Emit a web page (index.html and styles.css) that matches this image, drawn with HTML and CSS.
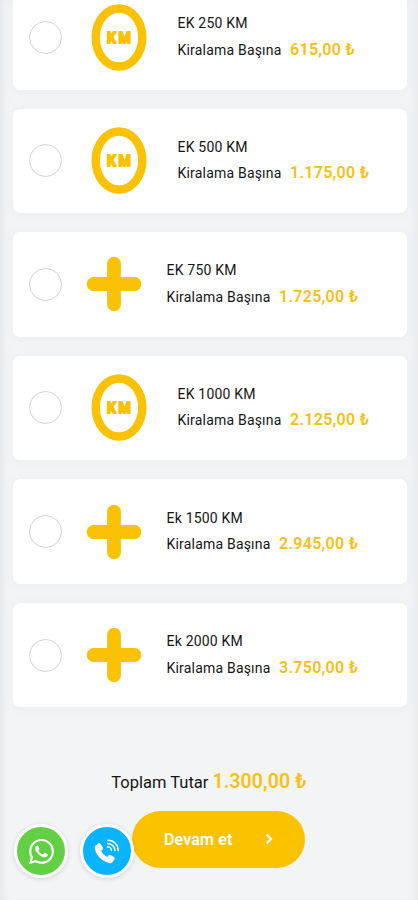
FILE: index.html
```html
<!DOCTYPE html>
<html lang="tr">
<head>
<meta charset="utf-8">
<meta name="viewport" content="width=device-width, initial-scale=1">
<title>Ek Kilometre</title>
<link rel="stylesheet" href="styles.css">
</head>
<body>
<svg class="defs" aria-hidden="true">
  <symbol id="ring" viewBox="0 0 56 67">
    <ellipse cx="28" cy="33.5" rx="23.3" ry="29" fill="none" stroke="#fac203" stroke-width="8.4"/>
  </symbol>
  <symbol id="plus" viewBox="0 0 56 56">
    <path d="M28 7.6v40.8M7.6 28h40.8" fill="none" stroke="#fac203" stroke-width="13.8" stroke-linecap="round"/>
  </symbol>
</svg>
<main class="page">
  <div class="options">
    <label class="card"><span class="radio"></span><svg class="icon km" viewBox="0 0 56 67"><use href="#ring"/><text class="km-label" x="29.2" y="38.6" text-anchor="middle">KM</text></svg><span class="info"><span class="name">EK 250 KM</span><span class="line">Kiralama Başına <b class="price">615,00 ₺</b></span></span></label>
    <label class="card"><span class="radio"></span><svg class="icon km" viewBox="0 0 56 67"><use href="#ring"/><text class="km-label" x="29.2" y="38.6" text-anchor="middle">KM</text></svg><span class="info"><span class="name">EK 500 KM</span><span class="line">Kiralama Başına <b class="price">1.175,00 ₺</b></span></span></label>
    <label class="card"><span class="radio"></span><svg class="icon plus"><use href="#plus"/></svg><span class="info"><span class="name">EK 750 KM</span><span class="line">Kiralama Başına <b class="price">1.725,00 ₺</b></span></span></label>
    <label class="card"><span class="radio"></span><svg class="icon km" viewBox="0 0 56 67"><use href="#ring"/><text class="km-label" x="29.2" y="38.6" text-anchor="middle">KM</text></svg><span class="info"><span class="name">EK 1000 KM</span><span class="line">Kiralama Başına <b class="price">2.125,00 ₺</b></span></span></label>
    <label class="card"><span class="radio"></span><svg class="icon plus"><use href="#plus"/></svg><span class="info"><span class="name">Ek 1500 KM</span><span class="line">Kiralama Başına <b class="price">2.945,00 ₺</b></span></span></label>
    <label class="card"><span class="radio"></span><svg class="icon plus"><use href="#plus"/></svg><span class="info"><span class="name">Ek 2000 KM</span><span class="line">Kiralama Başına <b class="price">3.750,00 ₺</b></span></span></label>
  </div>
  <div class="total">Toplam Tutar <b class="amount">1.300,00 ₺</b></div>
  <button class="next">Devam et
    <svg class="chevron" viewBox="0 0 8 12"><path d="M1.5 1.5 6 6l-4.5 4.5" fill="none" stroke="#fff" stroke-width="2.2"/></svg>
  </button>
</main>
<div class="contacts">
  <a class="contact whatsapp">
    <svg viewBox="0 0 24 24"><path fill="#fff" d="M17.472 14.382c-.297-.149-1.758-.867-2.03-.967-.273-.099-.471-.148-.67.15-.197.297-.767.966-.94 1.164-.173.199-.347.223-.644.075-.297-.15-1.255-.463-2.39-1.475-.883-.788-1.48-1.761-1.653-2.059-.173-.297-.018-.458.13-.606.134-.133.298-.347.446-.52.149-.174.198-.298.298-.497.099-.198.05-.371-.025-.52-.075-.149-.669-1.612-.916-2.207-.242-.579-.487-.5-.669-.51-.173-.008-.371-.01-.57-.01-.198 0-.52.074-.792.372-.272.297-1.04 1.016-1.04 2.479 0 1.462 1.065 2.875 1.213 3.074.149.198 2.096 3.2 5.077 4.487.709.306 1.262.489 1.694.625.712.227 1.36.195 1.871.118.571-.085 1.758-.719 2.006-1.413.248-.694.248-1.289.173-1.413-.074-.124-.272-.198-.57-.347m-5.421 7.403h-.004a9.87 9.87 0 0 1-5.031-1.378l-.361-.214-3.741.982.998-3.648-.235-.374a9.86 9.86 0 0 1-1.51-5.26c.001-5.45 4.436-9.884 9.888-9.884 2.64 0 5.122 1.03 6.988 2.898a9.825 9.825 0 0 1 2.893 6.994c-.003 5.45-4.437 9.884-9.885 9.884m8.413-18.297A11.815 11.815 0 0 0 12.05 0C5.495 0 .16 5.335.157 11.892c0 2.096.547 4.142 1.588 5.945L.057 24l6.305-1.654a11.882 11.882 0 0 0 5.683 1.448h.005c6.554 0 11.89-5.335 11.893-11.893a11.821 11.821 0 0 0-3.48-8.413z"/></svg>
  </a>
  <a class="contact phone">
    <svg viewBox="0 0 26 26"><path fill="#fff" d="M1.3 7.3 4.3 4.8c1-.8 2-.5 2.6.4l2.2 3.5c.6 1 .4 1.8-.4 2.5l-1.3 1.1c1.3 2.8 3.5 5 6.3 6.4l1.2-1.5c.7-.8 1.5-.9 2.5-.4l3.3 2c1 .6 1.2 1.5.5 2.5l-2.100 3c-.6.8-1.5 1-2.5.8C7.8 23.2 2.3 17.3.8 9.600c-.2-1 0-1.700.5-2.300z"/>
    <g fill="none" stroke="#fff" stroke-width="1.5" stroke-linecap="round"><path d="M14.5 1.200c6 0 10.700 4.700 10.700 10.900"/><path d="M14.2 4.600c4 0 7.500 3.400 7.500 7.400"/><path d="M13.900 8c2.200 0 4.200 1.800 4.200 3.900"/></g></svg>
  </a>
</div>
</body>
</html>
```
FILE: styles.css
```css
* { box-sizing: border-box; }
html, body { height: 100%; }
body {
  margin: 0;
  overflow: hidden;
  background: #f2f4f6;
  font-family: Roboto, "Liberation Sans", sans-serif;
  color: #151515;
}
.defs { position: absolute; width: 0; height: 0; }
.page {
  height: 900px;
  overflow: hidden;
  display: flex;
  flex-direction: column;
  align-items: center;
  box-shadow: inset 7px 0 7px -4px #e5e8eb, inset -7px 0 7px -4px #e5e8eb;
}
.options {
  align-self: stretch;
  display: flex;
  flex-direction: column;
  gap: 19px;
  margin: -15.1px 11.5px 0 13px;
}
.card {
  display: flex;
  align-items: center;
  height: 104.6px;
  flex: none;
  padding-left: 16px;
  background: #fff;
  border-radius: 7px;
  box-shadow: 0 1px 7px 4px rgba(0, 0, 0, .02);
}
.radio {
  width: 33px;
  height: 33px;
  border: 1px solid #d2d2d2;
  border-radius: 50%;
}
.icon { flex: none; }
.icon.km { width: 56px; height: 67px; margin: 0 30.5px 0 29px; }
.icon.plus { width: 56px; height: 56px; margin: 0 24.5px 0 24px; }
.km-label {
  font: 700 14px Roboto, sans-serif;
  letter-spacing: 2.6px;
  fill: #fac203;
  stroke: #fac203;
  stroke-width: 1.8px;
  stroke-linejoin: round;
}
.info {
  display: flex;
  flex-direction: column;
  font-size: 14px;
  line-height: 26.5px;
  white-space: nowrap;
  padding-bottom: 1px;
}
.name { letter-spacing: .2px; }
.line { display: flex; gap: 8.5px; letter-spacing: .2px; }
.price { font-size: 16px; font-weight: 600; color: #f7c015; letter-spacing: .28px; }
.total {
  margin-top: 62px;
  font-size: 16.5px;
  line-height: 26px;
  white-space: nowrap;
}
.amount { font-size: 19.5px; font-weight: 600; color: #f7c015; letter-spacing: .1px; }
.next {
  display: flex;
  align-items: center;
  justify-content: space-between;
  width: 173px;
  height: 57px;
  margin: 14.5px 0 0 19px;
  padding: 0 32px;
  border: 0;
  border-radius: 29px;
  background: #fbc200;
  color: #fff;
  font: 600 16px Roboto, sans-serif;
  letter-spacing: .15px;
}
.chevron { width: 8px; height: 12px; }
.contacts {
  position: fixed;
  left: 14px;
  bottom: 22px;
  display: flex;
  gap: 11.5px;
}
.contact {
  display: flex;
  align-items: center;
  justify-content: center;
  width: 54px;
  height: 54px;
  border: 3px solid #fff;
  border-radius: 50%;
  box-shadow: 0 1px 5px rgba(0, 0, 0, .14);
}
.whatsapp { background: #62cf45; }
.phone { background: #08b4ff; }
.contact svg { width: 25px; height: 25px; }
```
